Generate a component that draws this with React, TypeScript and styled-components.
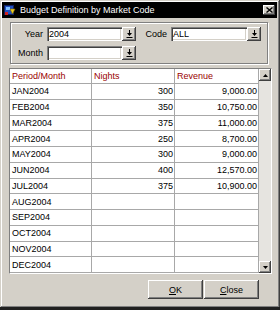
import React from 'react';
import styled, { createGlobalStyle } from 'styled-components';

const GlobalStyle = createGlobalStyle`
  html, body {
    margin: 0;
    padding: 0;
    background: #d4d0c8;
  }
  body {
    font-family: "Liberation Sans", Arial, sans-serif;
    font-size: 9px;
  }
  * {
    box-sizing: border-box;
  }
`;

const Window = styled.div`
  width: 280px;
  height: 310px;
  background: #d4d0c8;
  display: flex;
  flex-direction: column;
  padding: 2px 3px 4px 2px;
  box-shadow: inset 0 -3px #202020, inset -1px -1px #404040, inset 1px 1px #d4d0c8,
    inset -2px -4px #808080, inset 2px 2px #fff;
`;

const TitleBar = styled.div`
  height: 16px;
  background: #000;
  display: flex;
  align-items: center;
  padding: 0 2px 0 2px;
  gap: 4px;
  color: #fff;
  font-size: 9px;
`;

const CloseBox = styled.div`
  margin-left: auto;
  width: 12px;
  height: 10px;
  background: #d4d0c8;
  display: flex;
  align-items: center;
  justify-content: center;
  box-shadow: inset -1px -1px #404040, inset 1px 1px #fff, inset -2px -2px #808080;
`;

const GroupBox = styled.div`
  margin: 4px 9px 0 8px;
  height: 42px;
  border: 1px solid #808080;
  box-shadow: inset 1px 1px #fff, 1px 1px #fff;
  padding: 4px 0 3px 1px;
  display: flex;
  flex-direction: column;
  gap: 5px;
`;

const FieldRow = styled.div`
  display: flex;
  align-items: center;
  height: 14px;
`;

const Label = styled.span`
  width: 35px;
  padding-right: 4px;
  text-align: right;
  color: #000;
`;

const Field = styled.div<{ $w: number }>`
  width: ${(p) => p.$w}px;
  height: 14px;
  background: #fff;
  padding: 0 2px;
  display: flex;
  align-items: center;
  color: #000;
  box-shadow: inset 1px 1px #808080, inset 2px 2px #404040, inset -1px -1px #fff,
    inset -2px -2px #d4d0c8;
`;

const DropButton = styled.div`
  width: 14px;
  height: 14px;
  background: #d4d0c8;
  display: flex;
  align-items: center;
  justify-content: center;
  box-shadow: inset -1px -1px #404040, inset 1px 1px #fff, inset -2px -2px #808080;
`;

const GridFrame = styled.div`
  margin: 4px 5px 0 7px;
  height: 206px;
  display: flex;
  border: 1px solid;
  border-color: #808080 #fff #fff #808080;
`;

const Grid = styled.div`
  width: 249px;
  display: grid;
  grid-template-columns: 82px 83px 84px;
  grid-template-rows: 15px repeat(12, 1fr);
  background: #fff;
`;

const Cell = styled.div<{ $head?: boolean; $num?: boolean }>`
  border-right: 1px solid #a8a8a8;
  border-bottom: 1px solid #a8a8a8;
  display: flex;
  align-items: center;
  justify-content: ${(p) => (p.$num ? 'flex-end' : 'flex-start')};
  padding: 0 1px 0 2px;
  color: ${(p) => (p.$head ? '#990000' : '#000')};
  white-space: nowrap;
`;

const ScrollBar = styled.div`
  width: 12px;
  display: flex;
  flex-direction: column;
  background: #e6e4e0;
`;

const ScrollButton = styled.div`
  height: 12px;
  background: #d4d0c8;
  display: flex;
  align-items: center;
  justify-content: center;
  box-shadow: inset -1px -1px #404040, inset 1px 1px #fff, inset -2px -2px #808080;
`;

const ScrollTrack = styled.div`
  flex: 1;
`;

const ButtonRow = styled.div`
  margin-top: 6px;
  display: flex;
  justify-content: flex-end;
  gap: 1px;
  padding-right: 18px;
`;

const PushButton = styled.div`
  width: 55px;
  height: 19px;
  background: #d4d0c8;
  display: flex;
  align-items: center;
  justify-content: center;
  color: #000;
  box-shadow: inset -1px -1px #404040, inset 1px 1px #fff, inset -2px -2px #808080;

  u {
    text-decoration: underline;
  }
`;

const AppIcon = () => (
  <svg width="12" height="12" viewBox="0 0 12 12">
    <rect x="0.5" y="1.5" width="9" height="9" fill="#2050c0" stroke="#102060" />
    <rect x="2" y="3" width="4" height="3" fill="#80c0ff" />
    <path d="M6 5 L11 5 L8.5 10 Z" fill="#f0d020" stroke="#806000" strokeWidth="0.6" />
    <rect x="1" y="8" width="3" height="3" fill="#d02020" />
  </svg>
);

const CloseGlyph = () => (
  <svg width="7" height="6" viewBox="0 0 7 6">
    <path d="M0.5 0.5 L6.5 5.5 M6.5 0.5 L0.5 5.5" stroke="#000" strokeWidth="1.4" />
  </svg>
);

const DropGlyph = () => (
  <svg width="7" height="8" viewBox="0 0 7 8">
    <path d="M3 0h1v3h2l-2.5 3l-2.5-3h2z" fill="#000" />
    <rect x="0.5" y="7" width="6" height="1" fill="#000" />
  </svg>
);

const Arrow = ({ up }: { up?: boolean }) => (
  <svg width="5" height="3" viewBox="0 0 5 3">
    <path d={up ? 'M0 3 L5 3 L2.5 0 Z' : 'M0 0 L5 0 L2.5 3 Z'} fill="#000" />
  </svg>
);

const rows = [
  { period: 'JAN2004', nights: '300', revenue: '9,000.00' },
  { period: 'FEB2004', nights: '350', revenue: '10,750.00' },
  { period: 'MAR2004', nights: '375', revenue: '11,000.00' },
  { period: 'APR2004', nights: '250', revenue: '8,700.00' },
  { period: 'MAY2004', nights: '300', revenue: '9,000.00' },
  { period: 'JUN2004', nights: '400', revenue: '12,570.00' },
  { period: 'JUL2004', nights: '375', revenue: '10,900.00' },
  { period: 'AUG2004', nights: '', revenue: '' },
  { period: 'SEP2004', nights: '', revenue: '' },
  { period: 'OCT2004', nights: '', revenue: '' },
  { period: 'NOV2004', nights: '', revenue: '' },
  { period: 'DEC2004', nights: '', revenue: '' },
];

const App: React.FC = () => {
  return (
    <>
      <GlobalStyle />
      <Window>
        <TitleBar>
          <AppIcon />
          <span>Budget Definition by Market Code</span>
          <CloseBox>
            <CloseGlyph />
          </CloseBox>
        </TitleBar>

        <GroupBox>
          <FieldRow>
            <Label>Year</Label>
            <Field $w={75}>2004</Field>
            <DropButton>
              <DropGlyph />
            </DropButton>
            <Label>Code</Label>
            <Field $w={76}>ALL</Field>
            <DropButton>
              <DropGlyph />
            </DropButton>
          </FieldRow>
          <FieldRow>
            <Label>Month</Label>
            <Field $w={75} />
            <DropButton>
              <DropGlyph />
            </DropButton>
          </FieldRow>
        </GroupBox>

        <GridFrame>
          <Grid>
            <Cell $head>Period/Month</Cell>
            <Cell $head>Nights</Cell>
            <Cell $head>Revenue</Cell>
            {rows.map((r) => (
              <React.Fragment key={r.period}>
                <Cell>{r.period}</Cell>
                <Cell $num>{r.nights}</Cell>
                <Cell $num>{r.revenue}</Cell>
              </React.Fragment>
            ))}
          </Grid>
          <ScrollBar>
            <ScrollButton>
              <Arrow up />
            </ScrollButton>
            <ScrollTrack />
            <ScrollButton>
              <Arrow />
            </ScrollButton>
          </ScrollBar>
        </GridFrame>

        <ButtonRow>
          <PushButton>
            <span>
              <u>O</u>K
            </span>
          </PushButton>
          <PushButton>
            <span>
              <u>C</u>lose
            </span>
          </PushButton>
        </ButtonRow>
      </Window>
    </>
  );
};

export default App;
